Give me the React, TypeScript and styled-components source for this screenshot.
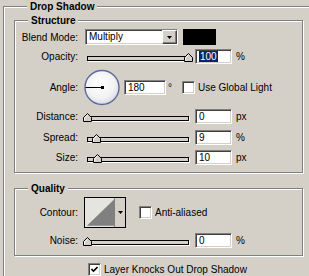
import React from "react";
import styled, { createGlobalStyle } from "styled-components";

const GlobalStyle = createGlobalStyle`
  html, body {
    margin: 0;
    padding: 0;
    background: #d4d0c8;
    overflow: hidden;
  }
  body {
    width: 309px;
    height: 276px;
    font-family: "Liberation Sans", Arial, sans-serif;
    font-size: 10px;
    color: #000;
  }
`;

// etched group box; $open drops the right/bottom edges that run off the dialog
const Group = styled.fieldset<{ $w: number; $mt?: number; $ml?: number; $pl?: number; $pb?: number; $open?: boolean }>`
  box-sizing: border-box;
  width: ${({ $w }) => $w}px;
  margin: ${({ $mt }) => $mt || 0}px 0 0 ${({ $ml }) => $ml || 0}px;
  padding: 0 0 ${({ $pb }) => $pb || 0}px ${({ $pl }) => $pl || 0}px;
  border: 1px solid #808080;
  border-right: ${({ $open }) => ($open ? "none" : "1px solid #808080")};
  border-bottom: ${({ $open }) => ($open ? "none" : "1px solid #808080")};
  box-shadow: ${({ $open }) => ($open ? "inset 1px 1px 0 #fff" : "inset 1px 1px 0 #fff, 1px 1px 0 #fff")};
  min-inline-size: 0;
`;

const Legend = styled.legend`
  margin-left: 13px;
  padding: 0 3px;
  font-weight: bold;
  font-size: 10px;
  line-height: 13px;
  background: #d4d0c8;
`;

const Row = styled.div<{ $top: number; $h: number }>`
  display: flex;
  align-items: center;
  height: ${({ $h }) => $h}px;
  margin-top: ${({ $top }) => $top}px;
`;

const Label = styled.span`
  flex-shrink: 0;
  width: 63px;
  margin-right: 6px;
  text-align: right;
  white-space: nowrap;
`;

const Select = styled.div`
  display: flex;
  box-sizing: border-box;
  width: 93px;
  height: 16px;
  margin-left: 1px;
  background: #fff;
  border-top: 1px solid #808080;
  border-left: 1px solid #808080;
  border-bottom: 1px solid #fff;
  border-right: 1px solid #fff;
  box-shadow: inset 1px 1px 0 #404040, inset -1px -1px 0 #d4d0c8;
`;

const SelectText = styled.span`
  flex: 1;
  padding-left: 3px;
  line-height: 14px;
`;

const SelectButton = styled.div`
  display: flex;
  align-items: center;
  justify-content: center;
  box-sizing: border-box;
  width: 15px;
  height: 14px;
  background: #d4d0c8;
  border-top: 1px solid #fff;
  border-left: 1px solid #fff;
  border-right: 1px solid #404040;
  border-bottom: 1px solid #404040;
  box-shadow: inset -1px -1px 0 #808080;
`;

const Swatch = styled.div`
  width: 33px;
  height: 16px;
  margin-left: 5px;
  background: #000;
`;

const SliderBox = styled.div`
  position: relative;
  flex-shrink: 0;
  width: 109px;
  height: 15px;
`;

const Track = styled.div`
  position: absolute;
  left: 3px;
  top: 7px;
  box-sizing: border-box;
  width: 102px;
  height: 5px;
  background: #d4d0c8;
  border: 1px solid #000;
  box-shadow: 1px 1px 0 #fff;
`;

const Thumb = styled.svg`
  position: absolute;
  top: 4px;
`;

const Field = styled.div<{ $w: number; $ml: number }>`
  box-sizing: border-box;
  width: ${({ $w }) => $w}px;
  height: 15px;
  margin-left: ${({ $ml }) => $ml}px;
  padding-left: 3px;
  background: #fff;
  line-height: 13px;
  border-top: 1px solid #808080;
  border-left: 1px solid #808080;
  border-bottom: 1px solid #fff;
  border-right: 1px solid #fff;
  box-shadow: inset 1px 1px 0 #404040, inset -1px -1px 0 #d4d0c8;
`;

const Selected = styled.span`
  background: #0a246a;
  color: #fff;
  padding: 0 1px;
`;

const Unit = styled.span<{ $ml?: number }>`
  margin-left: ${({ $ml }) => $ml ?? 4}px;
`;

const Box = styled.div<{ $ml: number }>`
  display: flex;
  align-items: center;
  justify-content: center;
  box-sizing: border-box;
  flex-shrink: 0;
  width: 13px;
  height: 13px;
  margin-left: ${({ $ml }) => $ml}px;
  background: #fff;
  border-top: 1px solid #808080;
  border-left: 1px solid #808080;
  border-bottom: 1px solid #fff;
  border-right: 1px solid #fff;
  box-shadow: inset 1px 1px 0 #404040, inset -1px -1px 0 #d4d0c8;
`;

const CheckText = styled.span`
  margin-left: 3px;
  white-space: nowrap;
`;

const Contour = styled.div`
  display: flex;
  box-sizing: border-box;
  width: 42px;
  height: 31px;
  border: 1px solid #000;
  background: #e6e4de;
`;

const ContourArrow = styled.div`
  display: flex;
  justify-content: center;
  align-items: center;
  width: 10px;
  border-left: 1px solid #808080;
  background: #d4d0c8;
`;

const BottomRow = styled.div`
  display: flex;
  align-items: center;
  height: 13px;
  margin-top: 7px;
  padding-left: 74px;
`;

const Arrow = () => (
  <svg width="5" height="3" viewBox="0 0 5 3">
    <polygon points="0,0 5,0 2.5,3" fill="#000" />
  </svg>
);

const Slider = ({ at }: { at: number }) => (
  <SliderBox>
    <Track />
    <Thumb width="9" height="9" viewBox="0 0 9 9" style={{ left: at }}>
      <path d="M0.5 8.5 V4.5 L4.5 0.5 L8.5 4.5 V8.5 Z" fill="#d4d0c8" stroke="#000" />
      <path d="M1.5 7.5 V4.9 L4.5 1.9" fill="none" stroke="#fff" />
    </Thumb>
  </SliderBox>
);

const Check = ({ checked, ml }: { checked?: boolean; ml: number }) => (
  <Box $ml={ml}>
    {checked && (
      <svg width="7" height="7" viewBox="0 0 7 7">
        <path d="M0.5 3 L2.5 5 L6.5 1" fill="none" stroke="#000" strokeWidth="1.6" />
      </svg>
    )}
  </Box>
);

const Dial = () => (
  <svg width="37" height="37" viewBox="0 0 37 37" style={{ flexShrink: 0 }}>
    <defs>
      <radialGradient id="dialFill" cx="0.45" cy="0.4" r="0.6">
        <stop offset="0" stopColor="#ffffff" />
        <stop offset="0.7" stopColor="#f2f2f4" />
        <stop offset="1" stopColor="#d8dae2" />
      </radialGradient>
    </defs>
    <circle cx="18" cy="18.5" r="17" fill="url(#dialFill)" stroke="#5b6c9a" strokeWidth="1.4" />
    <line x1="1.5" y1="18.5" x2="18" y2="18.5" stroke="#000" strokeWidth="1" />
    <rect x="17" y="17" width="3" height="3" fill="#000" />
  </svg>
);

export default function App() {
  return (
    <>
      <GlobalStyle />
      <Group $w={306} $ml={3} $pl={10} $open>
        <Legend>Drop Shadow</Legend>
        <Group $w={289} $mt={1} $pb={7}>
          <Legend>Structure</Legend>
          <Row $top={2} $h={16}>
            <Label>Blend Mode:</Label>
            <Select>
              <SelectText>Multiply</SelectText>
              <SelectButton>
                <Arrow />
              </SelectButton>
            </Select>
            <Swatch />
          </Row>
          <Row $top={4} $h={15}>
            <Label>Opacity:</Label>
            <Slider at={100} />
            <Field $w={37} $ml={2}>
              <Selected>100</Selected>
            </Field>
            <Unit>%</Unit>
          </Row>
          <Row $top={5} $h={37}>
            <Label>Angle:</Label>
            <Dial />
            <Field $w={42} $ml={3}>180</Field>
            <Unit $ml={2}>°</Unit>
            <Check ml={10} />
            <CheckText>Use Global Light</CheckText>
          </Row>
          <Row $top={3} $h={15}>
            <Label>Distance:</Label>
            <Slider at={-1} />
            <Field $w={37} $ml={2}>0</Field>
            <Unit>px</Unit>
          </Row>
          <Row $top={6} $h={15}>
            <Label>Spread:</Label>
            <Slider at={8} />
            <Field $w={37} $ml={2}>9</Field>
            <Unit>%</Unit>
          </Row>
          <Row $top={5} $h={15}>
            <Label>Size:</Label>
            <Slider at={9} />
            <Field $w={37} $ml={2}>10</Field>
            <Unit>px</Unit>
          </Row>
        </Group>
        <Group $w={289} $mt={9} $pb={7}>
          <Legend>Quality</Legend>
          <Row $top={2} $h={31}>
            <Label>Contour:</Label>
            <Contour>
              <svg width="30" height="29" viewBox="0 0 30 29">
                <polygon points="2,28 30,1 30,28" fill="#808080" />
              </svg>
              <ContourArrow>
                <Arrow />
              </ContourArrow>
            </Contour>
            <Check ml={13} />
            <CheckText>Anti-aliased</CheckText>
          </Row>
          <Row $top={5} $h={15}>
            <Label>Noise:</Label>
            <Slider at={-1} />
            <Field $w={37} $ml={2}>0</Field>
            <Unit>%</Unit>
          </Row>
        </Group>
        <BottomRow>
          <Check checked ml={0} />
          <CheckText>Layer Knocks Out Drop Shadow</CheckText>
        </BottomRow>
      </Group>
    </>
  );
}
